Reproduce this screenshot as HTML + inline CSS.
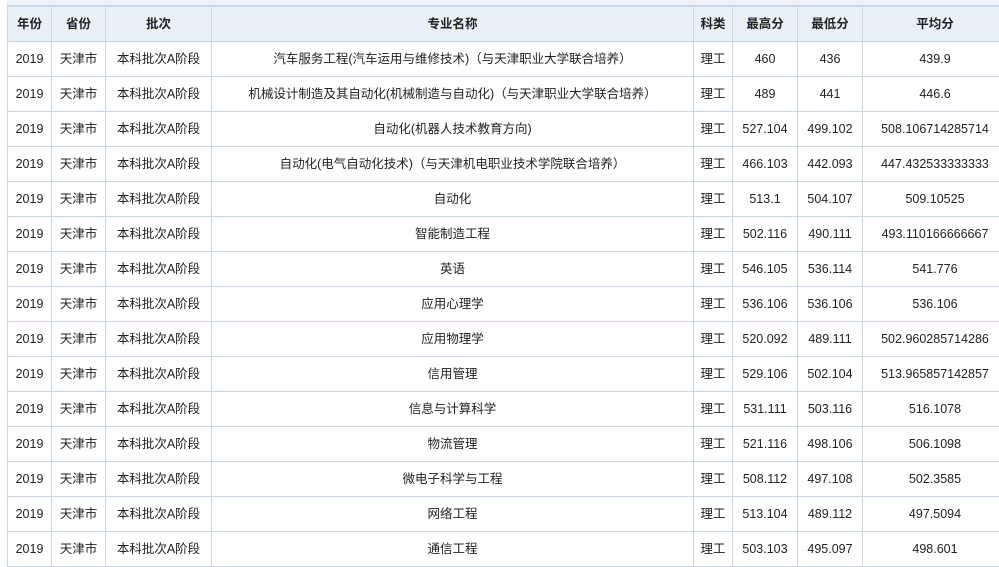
<!DOCTYPE html>
<html><head><meta charset="utf-8"><style>
html,body{margin:0;padding:0;background:#fff;width:999px;height:567px;overflow:hidden}
.top{position:absolute;left:7px;top:0;width:1000px;height:5px;background:#eef2f8;border-bottom:1px solid #c9d5e4}
table{position:absolute;left:7px;top:6px;border-collapse:collapse;table-layout:fixed;width:1000px;font-family:"Liberation Sans","Noto Sans CJK SC",sans-serif;font-size:12.5px;color:#222}
td,th{border:1px solid #c9d5e4;text-align:center;padding:0;height:34px;line-height:34px;white-space:nowrap;overflow:hidden}
td.n{position:relative;top:1px}
th{background:#eaf0f7;font-weight:bold;height:34px}
</style></head><body>
<div class="top"></div>
<table>
<colgroup><col style="width:44px"><col style="width:54px"><col style="width:106px"><col style="width:482px"><col style="width:39px"><col style="width:65px"><col style="width:65px"><col style="width:145px"></colgroup>
<tr><th>年份</th><th>省份</th><th>批次</th><th>专业名称</th><th>科类</th><th>最高分</th><th>最低分</th><th>平均分</th></tr>
<tr><td>2019</td><td>天津市</td><td>本科批次A阶段</td><td>汽车服务工程(汽车运用与维修技术)（与天津职业大学联合培养）</td><td>理工</td><td>460</td><td>436</td><td>439.9</td></tr>
<tr><td>2019</td><td>天津市</td><td>本科批次A阶段</td><td>机械设计制造及其自动化(机械制造与自动化)（与天津职业大学联合培养）</td><td>理工</td><td>489</td><td>441</td><td>446.6</td></tr>
<tr><td>2019</td><td>天津市</td><td>本科批次A阶段</td><td>自动化(机器人技术教育方向)</td><td>理工</td><td>527.104</td><td>499.102</td><td>508.106714285714</td></tr>
<tr><td>2019</td><td>天津市</td><td>本科批次A阶段</td><td>自动化(电气自动化技术)（与天津机电职业技术学院联合培养）</td><td>理工</td><td>466.103</td><td>442.093</td><td>447.432533333333</td></tr>
<tr><td>2019</td><td>天津市</td><td>本科批次A阶段</td><td>自动化</td><td>理工</td><td>513.1</td><td>504.107</td><td>509.10525</td></tr>
<tr><td>2019</td><td>天津市</td><td>本科批次A阶段</td><td>智能制造工程</td><td>理工</td><td>502.116</td><td>490.111</td><td>493.110166666667</td></tr>
<tr><td>2019</td><td>天津市</td><td>本科批次A阶段</td><td>英语</td><td>理工</td><td>546.105</td><td>536.114</td><td>541.776</td></tr>
<tr><td>2019</td><td>天津市</td><td>本科批次A阶段</td><td>应用心理学</td><td>理工</td><td>536.106</td><td>536.106</td><td>536.106</td></tr>
<tr><td>2019</td><td>天津市</td><td>本科批次A阶段</td><td>应用物理学</td><td>理工</td><td>520.092</td><td>489.111</td><td>502.960285714286</td></tr>
<tr><td>2019</td><td>天津市</td><td>本科批次A阶段</td><td>信用管理</td><td>理工</td><td>529.106</td><td>502.104</td><td>513.965857142857</td></tr>
<tr><td>2019</td><td>天津市</td><td>本科批次A阶段</td><td>信息与计算科学</td><td>理工</td><td>531.111</td><td>503.116</td><td>516.1078</td></tr>
<tr><td>2019</td><td>天津市</td><td>本科批次A阶段</td><td>物流管理</td><td>理工</td><td>521.116</td><td>498.106</td><td>506.1098</td></tr>
<tr><td>2019</td><td>天津市</td><td>本科批次A阶段</td><td>微电子科学与工程</td><td>理工</td><td>508.112</td><td>497.108</td><td>502.3585</td></tr>
<tr><td>2019</td><td>天津市</td><td>本科批次A阶段</td><td>网络工程</td><td>理工</td><td>513.104</td><td>489.112</td><td>497.5094</td></tr>
<tr><td>2019</td><td>天津市</td><td>本科批次A阶段</td><td>通信工程</td><td>理工</td><td>503.103</td><td>495.097</td><td>498.601</td></tr>
</table>
</body></html>
